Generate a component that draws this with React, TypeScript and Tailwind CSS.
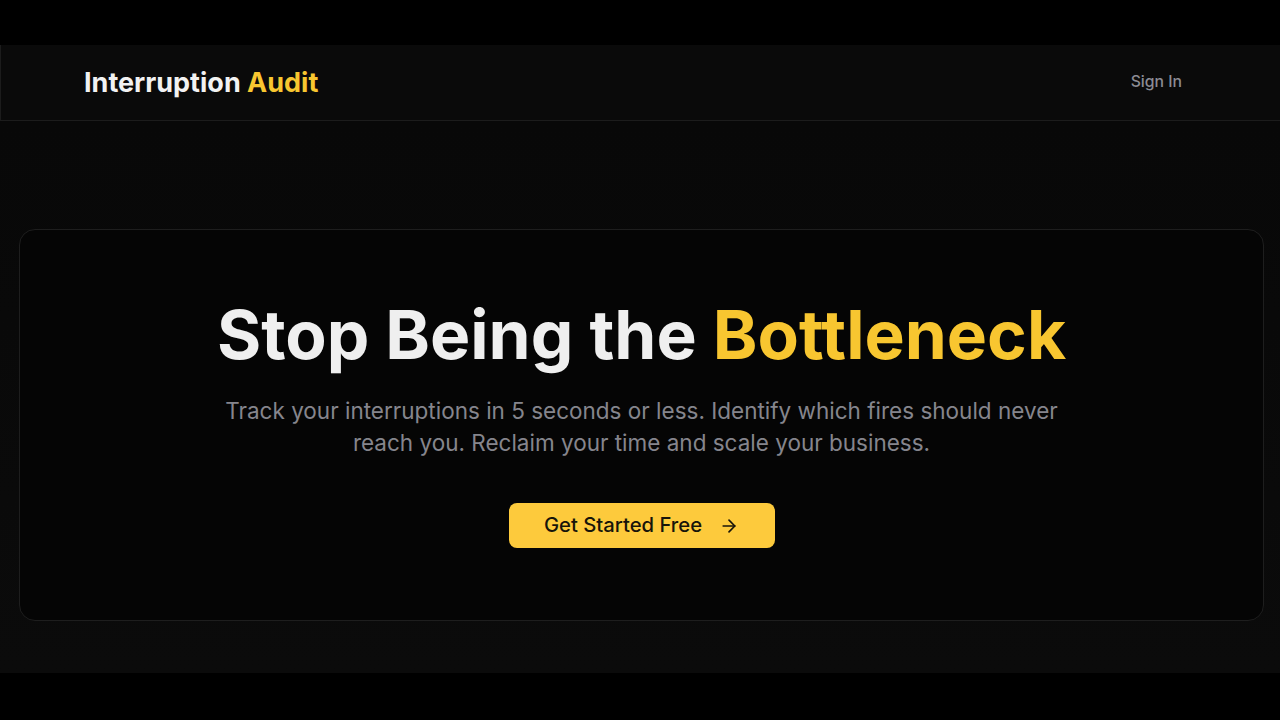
import React from 'react';

export default function App() {
  return (
    <div className="w-[1280px] h-[720px] bg-black flex flex-col overflow-hidden" style={{ fontFamily: 'Inter, "Noto Sans", sans-serif' }}>
      <div className="h-[45px] shrink-0 bg-black"></div>

      <div className="h-[628px] shrink-0 flex flex-col bg-[#0a0a0a]">
        <header className="h-[76px] shrink-0 flex items-center justify-between pl-[83px] pr-[98px] border-b border-l border-[#1c1c1c] bg-[#0a0a0a]">
          <h1 className="pt-[2px] text-[27px] font-bold text-[#f2f2f2]">
            Interruption <span className="text-[#f8c630]">Audit</span>
          </h1>
          <a href="#" className="pb-[2px] text-[15.75px] font-medium text-[#8c8c94]">Sign In</a>
        </header>

        <main className="flex-1 pt-[108px] pb-[52px] pl-[19px] pr-[16px] bg-gradient-to-b from-[#080808] to-[#0b0b0b]">
          <div className="h-[392px] rounded-[16px] border border-[#1e1e1e] bg-[#050505] flex flex-col items-center pt-[67px]">
            <h2 className="text-[67.6px] leading-[75px] font-bold text-[#efefef]">
              Stop Being the <span className="text-[#f8c630]">Bottleneck</span>
            </h2>
            <p className="mt-[23px] w-[864px] text-center text-[22.5px] leading-[31.5px] text-[#85858d]">
              Track your interruptions in 5 seconds or less. Identify which fires should never reach you. Reclaim your time and scale your business.
            </p>
            <button className="mt-[45px] w-[266px] h-[45px] rounded-[8px] bg-[#fdca3c] flex items-center justify-center gap-[17px] text-[20.25px] font-medium text-[#17140a]">
              Get Started Free
              <svg width="20" height="20" viewBox="0 0 24 24" fill="none" stroke="currentColor" strokeWidth="2" strokeLinecap="round" strokeLinejoin="round">
                <path d="M5 12h14" />
                <path d="M12 5l7 7-7 7" />
              </svg>
            </button>
          </div>
        </main>
      </div>

      <div className="flex-1 bg-black"></div>
    </div>
  );
}
